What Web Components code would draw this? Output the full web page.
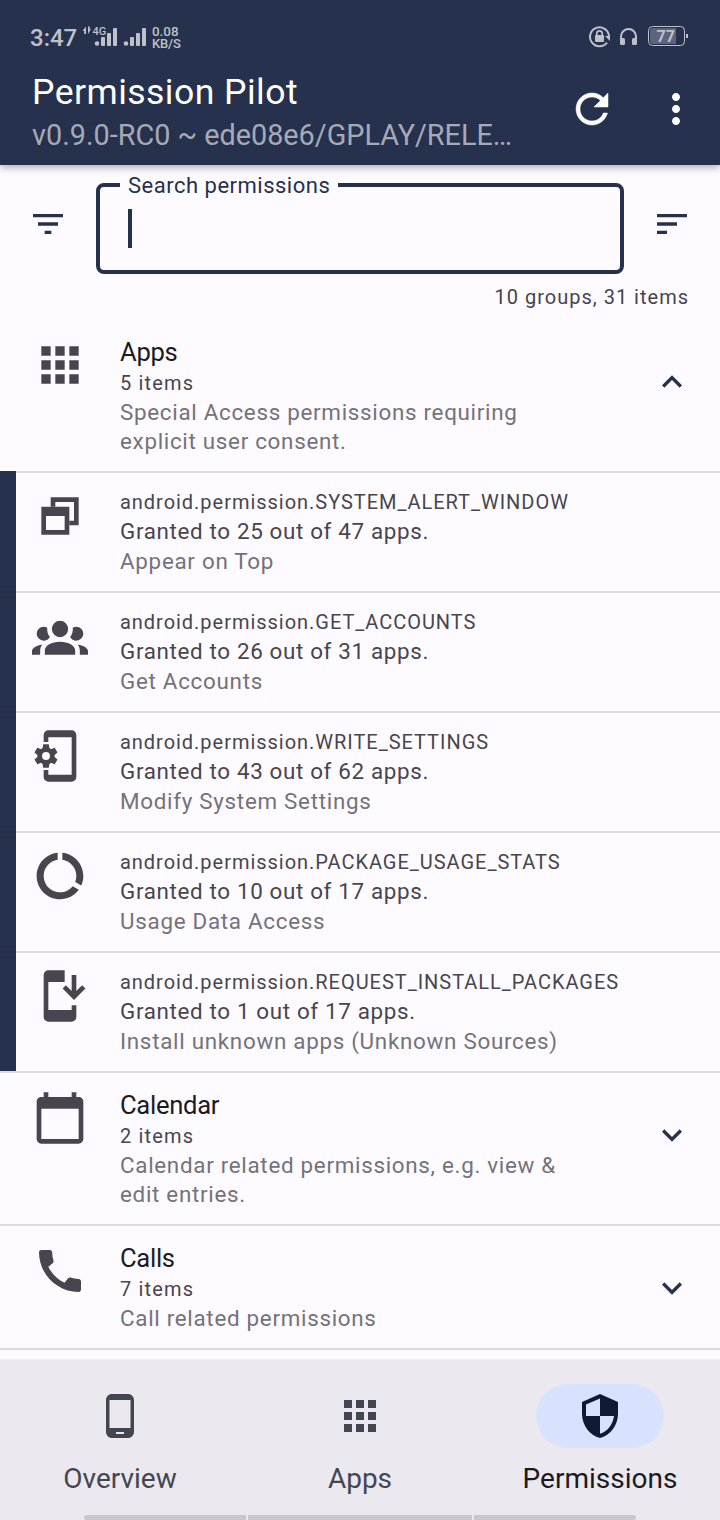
<!DOCTYPE html>
<html lang="en">
<head>
<meta charset="utf-8">
<title>Permission Pilot</title>
<style>
html, body { margin: 0; }
body { width: 720px; height: 1520px; overflow: hidden; background: #fdfbff; font-family: Roboto, sans-serif; }
</style>
</head>
<body>
<pilot-app></pilot-app>
<script>
const ICONS = {
  apps: '<path d="M4 8h4V4H4v4zm6 12h4v-4h-4v4zm-6 0h4v-4H4v4zm0-6h4v-4H4v4zm6 0h4v-4h-4v4zm6-10v4h4V4h-4zm-6 4h4V4h-4v4zm6 6h4v-4h-4v4zm0 6h4v-4h-4v4z"/>',
  windows: '<path d="M8 8V4h12v12h-4v-2h2V6h-8v2z"/><path fill-rule="evenodd" d="M4 8h12v12H4zM6 12v6h8v-6z"/>',
  group: '<path d="M12,5.5A3.5,3.5 0 0,1 15.5,9A3.5,3.5 0 0,1 12,12.5A3.5,3.5 0 0,1 8.5,9A3.5,3.5 0 0,1 12,5.5M5,8C5.56,8 6.08,8.15 6.53,8.42C6.38,9.85 6.8,11.27 7.66,12.38C7.16,13.34 6.16,14 5,14A3,3 0 0,1 2,11A3,3 0 0,1 5,8M19,8A3,3 0 0,1 22,11A3,3 0 0,1 19,14C17.84,14 16.84,13.34 16.34,12.38C17.2,11.27 17.62,9.85 17.47,8.42C17.92,8.15 18.44,8 19,8M5.5,18.25C5.5,16.18 8.41,14.5 12,14.5C15.59,14.5 18.5,16.18 18.5,18.25V20H5.5V18.25M0,20V18.5C0,17.11 1.89,15.94 4.45,15.6C3.86,16.28 3.5,17.22 3.5,18.25V20H0M24,20H20.5V18.25C20.5,17.22 20.14,16.28 19.55,15.6C22.11,15.94 24,17.11 24,18.5V20Z"/>',
  cog: '<path d="M5 6V3a2 2 0 0 1 2-2h10a2 2 0 0 1 2 2v18a2 2 0 0 1-2 2H7a2 2 0 0 1-2-2v-3h2v2h10V4H7v2z"/><circle cx="6" cy="12" r="2.700" fill="none" stroke="currentColor" stroke-width="2"/><path d="M4.400 9.400l.4-2.400h2.400l.4 2.400zM4.400 14.600l.4 2.400h2.400l.4-2.400z"/><path transform="rotate(60 6 12)" d="M4.400 9.400l.4-2.400h2.400l.4 2.400zM4.400 14.600l.4 2.400h2.400l.4-2.400z"/><path transform="rotate(120 6 12)" d="M4.400 9.400l.4-2.400h2.400l.4 2.400zM4.400 14.600l.4 2.400h2.400l.4-2.400z"/>',
  usage: '<path d="M13 2.05v3.03c3.39.49 6 3.39 6 6.92 0 .9-.18 1.75-.48 2.54l2.6 1.53c.56-1.24.88-2.62.88-4.07 0-5.18-3.95-9.45-9-9.95zM12 19c-3.87 0-7-3.13-7-7 0-3.53 2.61-6.43 6-6.92V2.05c-5.06.5-9 4.76-9 9.95 0 5.52 4.47 10 9.99 10 3.31 0 6.24-1.61 8.06-4.09l-2.6-1.53C16.17 17.98 14.21 19 12 19z"/>',
  install: '<path d="M17 16v2H7V6h7V1H7a2 2 0 0 0-2 2v18a2 2 0 0 0 2 2h10a2 2 0 0 0 2-2v-5zM18 13.700l-4.900-4.900 1.400-1.400L17 9.900V3h2v6.900l2.500-2.500 1.400 1.400z"/>',
  calendar: '<path d="M20 3h-1V1h-2v2H7V1H5v2H4c-1.1 0-2 .9-2 2v16c0 1.1.9 2 2 2h16c1.1 0 2-.9 2-2V5c0-1.1-.9-2-2-2zm0 18H4V8h16v13z"/>',
  call: '<path d="M20.01 15.38c-1.23 0-2.42-.2-3.53-.56-.35-.12-.74-.03-1.01.24l-1.57 1.97c-2.83-1.35-5.48-3.9-6.89-6.83l1.95-1.66c.27-.28.35-.67.24-1.02-.37-1.11-.56-2.3-.56-3.53 0-.54-.45-.99-.99-.99H4.19C3.65 3 3 3.24 3 3.99 3 13.28 10.73 21 20.01 21c.71 0 .99-.63.99-1.18v-3.45c0-.54-.45-.99-.99-.99z"/>',
  phone: '<path d="M16 1H8C6.34 1 5 2.34 5 4v16c0 1.66 1.34 3 3 3h8c1.66 0 3-1.34 3-3V4c0-1.66-1.34-3-3-3zm-2 20h-4v-1h4v1zm3.25-3H6.75V4h10.5v14z"/>',
  shield: '<path d="M12 1L3 5v6c0 5.55 3.84 10.74 9 12 5.16-1.26 9-6.45 9-12V5l-9-4zm0 10.99h7c-.53 4.12-3.28 7.79-7 8.94V12H5V6.3l7-3.11v8.8z"/>',
  refresh: '<path d="M17.65 6.35C16.2 4.9 14.21 4 12 4c-4.42 0-7.99 3.58-7.99 8s3.57 8 7.99 8c3.73 0 6.84-2.55 7.73-6h-2.08c-.82 2.33-3.04 4-5.65 4-3.31 0-6-2.69-6-6s2.69-6 6-6c1.66 0 3.14.69 4.22 1.78L13 11h7V4l-2.35 2.35z" stroke="currentColor" stroke-width=".25"/>',
  more: '<path d="M12 8c1.1 0 2-.9 2-2s-.9-2-2-2-2 .9-2 2 .9 2 2 2zm0 2c-1.1 0-2 .9-2 2s.9 2 2 2 2-.9 2-2-.9-2-2-2zm0 6c-1.1 0-2 .9-2 2s.9 2 2 2 2-.9 2-2-.9-2-2-2z"/>',
  filter: '<path d="M10 18h4v-2h-4v2zM3 6v2h18V6H3zm3 7h12v-2H6v2z"/>',
  sort: '<path d="M3 18h6v-2H3v2zM3 6v2h18V6H3zm0 7h12v-2H3v2z"/>',
  up: '<path d="M12 8l-6 6 1.41 1.41L12 10.83l4.59 4.58L18 14z"/>',
  down: '<path d="M16.59 8.59L12 13.17 7.41 8.59 6 10l6 6 6-6z"/>'
};

const define = (name, render) => customElements.define(name, class extends HTMLElement {
  constructor() { super(); this.attachShadow({ mode: 'open' }); }
  connectedCallback() { this.shadowRoot.innerHTML = render(this); }
});

define('m-icon', el => `
<style>:host{display:block;flex:none;width:var(--s,56px);height:var(--s,56px)}svg{display:block;width:100%;height:100%;fill:currentColor}</style>
<svg viewBox="0 0 24 24">${ICONS[el.getAttribute('name')]}</svg>`);

define('status-bar', () => `
<style>
:host{display:flex;height:72px;color:#bec1ca;padding:0 32px 0 30px;box-sizing:border-box;justify-content:space-between}
.l,.r{display:flex;align-items:flex-start}
.time{font-size:24px;font-weight:500;line-height:28px;margin-top:24px;width:52px}
svg{display:block;flex:none}
.rate{font-size:13.400px;font-weight:500;line-height:13px;margin:25px 0 0 5px}
.rate div+div{font-size:13px;letter-spacing:-.15px;line-height:12px}
text{font-family:Roboto,sans-serif;fill:currentColor}
</style>
<div class="l"><span class="time">3:47</span>
<svg width="65" height="60" fill="currentColor"><path d="M4 26.500v7.500h-1.800v-3H.5zM6 34v-7.500h1.800V29H9z"/><text x="10.500" y="35" font-size="11" font-weight="500">4G</text>
<circle cx="15" cy="43.500" r="2.300"/><rect x="19" y="37" width="4" height="9" rx="1"/><rect x="25" y="33" width="4" height="13" rx="1"/><rect x="31" y="28" width="4" height="18" rx="1"/>
<circle cx="44" cy="43.500" r="2.300"/><rect x="48" y="37" width="4" height="9" rx="1"/><rect x="54" y="33" width="4" height="13" rx="1"/><rect x="60" y="28" width="4" height="18" rx="1"/></svg>
<div class="rate"><div>0.08</div><div>KB/S</div></div></div>
<div class="r"><svg width="100" height="60" fill="none" stroke="currentColor">
<path d="M19 42.700A9.500 9.500 0 1 1 21 36" stroke-width="2"/><path d="M17 36h5v5z" fill="currentColor" stroke="none"/><path d="M8.800 35v-1.500a2.700 2.700 0 0 1 5.400 0V35" stroke-width="1.700"/><rect x="7" y="35" width="9" height="7" rx="1" fill="currentColor" stroke="none"/>
<path d="M33 42v-5.500a7.500 7.500 0 0 1 15 0v5.500" stroke-width="2"/><rect x="32" y="38" width="5" height="7" rx="1.500" fill="currentColor" stroke="none"/><rect x="44" y="38" width="5" height="7" rx="1.500" fill="currentColor" stroke="none"/>
<rect x="60.500" y="26.500" width="36" height="19" rx="4"/><path d="M65 28h23v16H65a3 3 0 0 1-3-3V31a3 3 0 0 1 3-3z" fill="#5b647a" stroke="none"/><rect x="98" y="34" width="2" height="4" fill="currentColor" stroke="none"/>
<text x="68.500" y="42" font-size="16" font-weight="700" stroke="none">77</text></svg></div>`);

define('top-bar', () => `
<style>
:host{display:block;position:relative;height:165px;background:#26314d;box-shadow:0 2px 8px rgba(0,0,0,.35)}
.bar{display:flex;height:93px;align-items:flex-start}
.t{flex:1;padding-left:32px}
.a{font-size:35.600px;line-height:40px;color:#fff;letter-spacing:.45px}
.b{font-size:28.800px;line-height:42px;color:#a6aab6;margin-top:2px}
m-icon{--s:48px;color:#fff;margin-top:13px}
.m{margin:13px 20px 0 36px}
</style>
<status-bar></status-bar>
<div class="bar"><div class="t"><div class="a">Permission Pilot</div><div class="b">v0.9.0-RC0 ~ ede08e6/GPLAY/RELE…</div></div>
<m-icon name="refresh"></m-icon><m-icon class="m" name="more"></m-icon></div>`);

define('search-row', () => `
<style>
:host{display:block;height:155px;color:#26314d}
.row{display:flex;padding:18px 28px 0;justify-content:space-between}
m-icon{--s:40px;margin-top:21px}
.box{position:relative;width:528px;height:91px;box-sizing:border-box;border:4px solid #26314d;border-radius:8px;padding:22px 28px}
.box span{position:absolute;left:20px;top:-14px;width:218px;box-sizing:border-box;padding-left:8px;background:#fdfbff;font-size:22px;line-height:26px;letter-spacing:.5px;white-space:nowrap}
.box i{display:block;width:4px;height:39px;background:#26314d}
.count{padding:9px 31px 0;text-align:right;font-size:20px;line-height:28px;letter-spacing:1px;color:#46444c}
</style>
<div class="row"><m-icon name="filter"></m-icon><div class="box"><span>Search permissions</span><i></i></div><m-icon name="sort"></m-icon></div>
<div class="count">10 groups, 31 items</div>`);

define('group-row', el => `
<style>
:host{display:flex;padding:16px 28px 15px 32px;border-bottom:2px solid #dcdae0;color:#48454e}
.i{margin-top:1px}
.t{flex:1;margin-left:32px}
.h{font-size:25.600px;line-height:32px;letter-spacing:-.3px;color:#1b1b1f}
.n{font-size:20px;line-height:30px;letter-spacing:1.150px}
.d{font-size:22.400px;line-height:29px;letter-spacing:.7px;color:#74727a;width:470px}
.c{--s:40px;margin-top:26px;color:#26314d}
</style>
<m-icon class="i" name="${el.getAttribute('icon')}"></m-icon>
<div class="t"><div class="h">${el.getAttribute('heading')}</div><div class="n">${el.getAttribute('count')} items</div><div class="d"><slot></slot></div></div>
<m-icon class="c" name="${el.hasAttribute('open') ? 'up' : 'down'}"></m-icon>`);

define('permission-list', () => `
<style>
:host{display:block;position:relative}
.bar{position:absolute;left:0;top:-2px;bottom:2px;width:16px;background:#26314d}
</style><div class="bar"></div><slot></slot>`);

define('permission-row', el => `
<style>
:host{display:flex;position:relative;padding:15px 32px;border-bottom:2px solid rgba(27,27,31,.145);color:#48454e}
:host(:last-child){border-color:#dcdae0}
.t{margin-left:32px;white-space:nowrap}
.p{font-size:20px;line-height:28px;letter-spacing:.970px}
.g,.d{font-size:22.400px;line-height:30px;letter-spacing:.650px}
.d{color:#74727a;letter-spacing:.710px}
</style>
<m-icon name="${el.getAttribute('icon')}"></m-icon>
<div class="t"><div class="p">android.permission.${el.getAttribute('permission')}</div><div class="g">Granted to ${el.getAttribute('granted')} apps.</div><div class="d"><slot></slot></div></div>`);

define('nav-item', el => `
<style>
:host{display:flex;flex:1;flex-direction:column;align-items:center;padding-top:24px;color:#44464f}
.pill{display:flex;align-items:center;justify-content:center;width:128px;height:64px;border-radius:32px}
m-icon{--s:48px}
.l{font-size:28px;line-height:34px;margin-top:14px}
:host([active]) .pill{background:#d8e2ff;color:#0e1a32}
:host([active]) .l{color:#1b1b1f}
</style>
<div class="pill"><m-icon name="${el.getAttribute('icon')}"></m-icon></div><div class="l"><slot></slot></div>`);

define('nav-bar', () => `
<style>
:host{display:flex;flex-direction:column;height:161px;background:#ebe9ef;box-sizing:border-box;border-top:1px solid #f1eff4}
.items{display:flex;height:155px}
.g{display:grid;grid-template-columns:162px 224px 162px;gap:2px;justify-content:center;height:5px}
.g i{background:#c9c7cc}.g i:first-child{border-radius:3px 0 0 3px}.g i:last-child{border-radius:0 3px 3px 0}
</style>
<div class="items"><nav-item icon="phone">Overview</nav-item><nav-item icon="apps">Apps</nav-item><nav-item icon="shield" active>Permissions</nav-item></div>
<div class="g"><i></i><i></i><i></i></div>`);

define('pilot-app', () => `
<style>:host{display:flex;flex-direction:column;width:720px;height:1520px}top-bar{z-index:1;flex:none}main{flex:1;min-height:0;overflow:hidden}nav-bar{flex:none}</style>
<top-bar></top-bar>
<main><search-row></search-row>
<group-row icon="apps" heading="Apps" count="5" open>Special Access permissions requiring<br>explicit user consent.</group-row>
<permission-list>
<permission-row icon="windows" permission="SYSTEM_ALERT_WINDOW" granted="25 out of 47">Appear on Top</permission-row>
<permission-row icon="group" permission="GET_ACCOUNTS" granted="26 out of 31">Get Accounts</permission-row>
<permission-row icon="cog" permission="WRITE_SETTINGS" granted="43 out of 62">Modify System Settings</permission-row>
<permission-row icon="usage" permission="PACKAGE_USAGE_STATS" granted="10 out of 17">Usage Data Access</permission-row>
<permission-row icon="install" permission="REQUEST_INSTALL_PACKAGES" granted="1 out of 17">Install unknown apps (Unknown Sources)</permission-row>
</permission-list>
<group-row icon="calendar" heading="Calendar" count="2">Calendar related permissions, e.g. view &amp;<br>edit entries.</group-row>
<group-row icon="call" heading="Calls" count="7">Call related permissions</group-row>
</main>
<nav-bar></nav-bar>`);
</script>
</body>
</html>
